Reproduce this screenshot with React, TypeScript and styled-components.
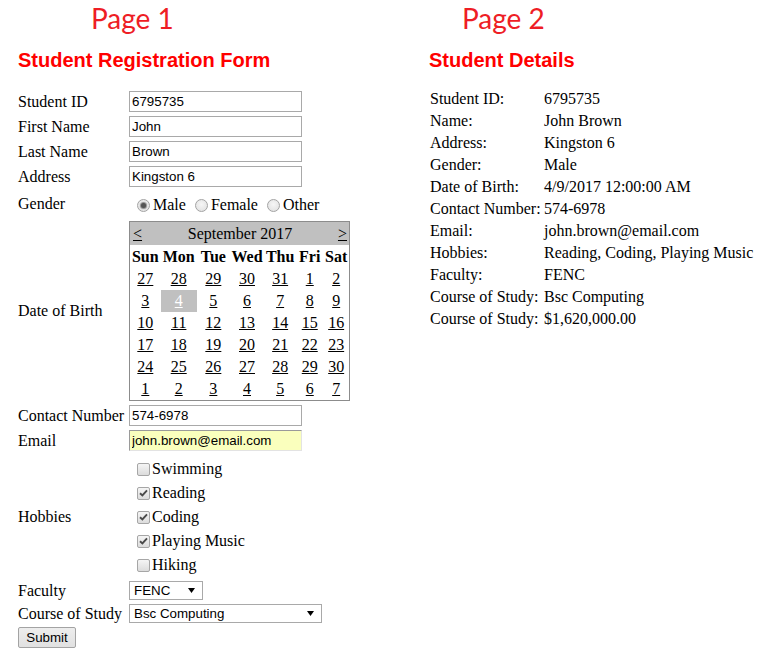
import React from "react";
import styled, { createGlobalStyle } from "styled-components";

const Global = createGlobalStyle`
  html, body { margin: 0; padding: 0; background: #fff; }
  body {
    font-family: "Liberation Serif", "Times New Roman", serif;
    font-size: 16px;
    color: #000;
  }
`;

const Page = styled.div`
  display: flex;
  align-items: flex-start;
  padding: 1px 0 0 18px;
  width: 759px;
  height: 654px;
  box-sizing: border-box;
  overflow: hidden;
`;

const Column = styled.div<{ $w?: number }>`
  display: flex;
  flex-direction: column;
  flex: none;
  width: ${(p) => (p.$w ? `${p.$w}px` : "auto")};
`;

const PageTag = styled.div<{ $indent: number }>`
  font-family: Lato, "Open Sans", sans-serif;
  font-size: 28px;
  line-height: 34px;
  color: #ee1d25;
  margin-left: ${(p) => p.$indent}px;
`;

const Heading = styled.h2`
  margin: 14px 0 0;
  font-family: "Liberation Sans", Arial, sans-serif;
  font-weight: bold;
  font-size: 20px;
  line-height: 23px;
  color: #ff0000;
`;

const Form = styled.form`
  display: flex;
  flex-direction: column;
  margin-top: 19px;
`;

const Row = styled.div<{ $h: number; $mt?: number }>`
  display: flex;
  align-items: center;
  height: ${(p) => p.$h}px;
  margin-top: ${(p) => p.$mt ?? 4}px;
  &:first-child {
    margin-top: 0;
  }
`;

const Label = styled.label`
  width: 111px;
  flex: none;
  line-height: 18px;
  white-space: nowrap;
`;

const TextInput = styled.input<{ $autofill?: boolean }>`
  box-sizing: border-box;
  width: 173px;
  height: 21px;
  margin: 0;
  padding: 1px 2px;
  border: 1px solid #a9a9a9;
  border-color: ${(p) => (p.$autofill ? "#9a9a9a #e3e3e3 #e3e3e3 #9a9a9a" : "#a9a9a9")};
  font-family: "Liberation Sans", Arial, sans-serif;
  font-size: 13.333px;
  color: #000;
  background: ${(p) => (p.$autofill ? "#faffbd" : "#fff")};
  outline: none;
`;

const OptionGroup = styled.div`
  display: flex;
  align-items: center;
  padding-left: 4px;
  padding-top: 2px;
`;

const Option = styled.span`
  display: inline-flex;
  align-items: center;
  margin-right: 5px;
  line-height: 18px;
`;

const RadioDot = styled.span<{ $on?: boolean }>`
  box-sizing: border-box;
  width: 13px;
  height: 13px;
  flex: none;
  margin: 0 3px 0 4px;
  border-radius: 50%;
  border: 1px solid #a3a3a3;
  background: radial-gradient(circle at 50% 40%, #f6f6f6 0%, #dedede 100%);
  display: inline-flex;
  align-items: center;
  justify-content: center;
  &::after {
    content: "";
    display: ${(p) => (p.$on ? "block" : "none")};
    width: 5px;
    height: 5px;
    border-radius: 50%;
    background: #555;
    box-shadow: 0 0 1px 1px #8a8a8a;
  }
`;

const CheckList = styled.div`
  display: flex;
  flex-direction: column;
  padding-left: 4px;
`;

const CheckRow = styled.div`
  display: flex;
  align-items: center;
  height: 24px;
  line-height: 18px;
`;

const CheckBox = styled.span`
  box-sizing: border-box;
  width: 13px;
  height: 13px;
  flex: none;
  margin: 0 2px 0 4px;
  border: 1px solid #a6a6a6;
  border-radius: 2px;
  background: linear-gradient(#f5f5f5, #dcdcdc);
  display: inline-flex;
  align-items: center;
  justify-content: center;
`;

const Cal = styled.table`
  width: 221px;
  border-collapse: collapse;
  border: 1px solid #8c8c8c;
  table-layout: fixed;
  font-family: "Liberation Serif", "Times New Roman", serif;
  font-size: 16px;
`;

const TitleCell = styled.td`
  background: #c0c0c0;
  padding: 0 2px 0 3px;
  height: 23px;
`;

const TitleBar = styled.div`
  display: flex;
  align-items: center;
  justify-content: space-between;
  line-height: 18px;
`;

const NavLink = styled.a`
  color: #000;
  text-decoration: underline;
  width: 20px;
  &:last-child {
    text-align: right;
  }
`;

const MonthName = styled.span`
  flex: 1;
  text-align: center;
`;

const DayHead = styled.th`
  height: 23px;
  padding: 0;
  font-weight: bold;
  text-align: center;
  white-space: nowrap;
`;

const DayCell = styled.td<{ $sel?: boolean }>`
  height: 22px;
  padding: 0;
  text-align: center;
  background: ${(p) => (p.$sel ? "#c0c0c0" : "transparent")};
  color: ${(p) => (p.$sel ? "#fff" : "#000")};
`;

const DayLink = styled.a`
  color: inherit;
  text-decoration: underline;
`;

const SelectBox = styled.div<{ $w: number }>`
  box-sizing: border-box;
  width: ${(p) => p.$w}px;
  height: 19px;
  border: 1px solid #a9a9a9;
  display: flex;
  align-items: center;
  justify-content: space-between;
  padding: 0 7px 0 4px;
  font-family: "Liberation Sans", Arial, sans-serif;
  font-size: 13.333px;
  background: #fff;
`;

const SubmitButton = styled.button`
  box-sizing: border-box;
  width: 58px;
  height: 21px;
  padding: 0;
  margin: 0;
  border: 1px solid #a3a3a3;
  border-radius: 2px;
  background: linear-gradient(#ededed, #e1e1e1);
  font-family: "Liberation Sans", Arial, sans-serif;
  font-size: 13.333px;
  color: #000;
`;

const Details = styled.div`
  display: grid;
  grid-template-columns: 114px auto;
  grid-auto-rows: 22px;
  align-items: center;
  margin: 16px 0 0 1px;
  line-height: 18px;
  white-space: nowrap;
`;

const Arrow = () => (
  <svg width="7" height="5" viewBox="0 0 7 5">
    <path d="M0 0 L7 0 L3.5 5 Z" fill="#000" />
  </svg>
);

const Tick = () => (
  <svg width="9" height="8" viewBox="0 0 9 8">
    <path d="M1 4.2 L3.4 6.5 L8 1.3" stroke="#4a4a4a" strokeWidth="1.9" fill="none" />
  </svg>
);

const weeks: number[][] = [
  [27, 28, 29, 30, 31, 1, 2],
  [3, 4, 5, 6, 7, 8, 9],
  [10, 11, 12, 13, 14, 15, 16],
  [17, 18, 19, 20, 21, 22, 23],
  [24, 25, 26, 27, 28, 29, 30],
  [1, 2, 3, 4, 5, 6, 7],
];
const dayNames = ["Sun", "Mon", "Tue", "Wed", "Thu", "Fri", "Sat"];
const colWidths = [31, 36, 33, 34, 32, 27, 26];

const hobbies = [
  { name: "Swimming", on: false },
  { name: "Reading", on: true },
  { name: "Coding", on: true },
  { name: "Playing Music", on: true },
  { name: "Hiking", on: false },
];

const details: [string, string][] = [
  ["Student ID:", "6795735"],
  ["Name:", "John Brown"],
  ["Address:", "Kingston 6"],
  ["Gender:", "Male"],
  ["Date of Birth:", "4/9/2017 12:00:00 AM"],
  ["Contact Number:", "574-6978"],
  ["Email:", "john.brown@email.com"],
  ["Hobbies:", "Reading, Coding, Playing Music"],
  ["Faculty:", "FENC"],
  ["Course of Study:", "Bsc Computing"],
  ["Course of Study:", "$1,620,000.00"],
];

const Calendar = () => (
  <Cal>
    <colgroup>
      {colWidths.map((w, i) => (
        <col key={i} style={{ width: w }} />
      ))}
    </colgroup>
    <tbody>
      <tr>
        <TitleCell colSpan={7}>
          <TitleBar>
            <NavLink>&lt;</NavLink>
            <MonthName>September 2017</MonthName>
            <NavLink>&gt;</NavLink>
          </TitleBar>
        </TitleCell>
      </tr>
      <tr>
        {dayNames.map((d) => (
          <DayHead key={d}>{d}</DayHead>
        ))}
      </tr>
      {weeks.map((w, wi) => (
        <tr key={wi}>
          {w.map((d, di) => (
            <DayCell key={di} $sel={wi === 1 && d === 4}>
              <DayLink>{d}</DayLink>
            </DayCell>
          ))}
        </tr>
      ))}
    </tbody>
  </Cal>
);

export default function App() {
  return (
    <>
      <Global />
      <Page>
        <Column $w={411}>
          <PageTag $indent={73}>Page 1</PageTag>
          <Heading>Student Registration Form</Heading>
          <Form onSubmit={(e) => e.preventDefault()}>
            <Row $h={21}>
              <Label>Student ID</Label>
              <TextInput defaultValue="6795735" />
            </Row>
            <Row $h={21}>
              <Label>First Name</Label>
              <TextInput defaultValue="John" />
            </Row>
            <Row $h={21}>
              <Label>Last Name</Label>
              <TextInput defaultValue="Brown" />
            </Row>
            <Row $h={21}>
              <Label>Address</Label>
              <TextInput defaultValue="Kingston 6" />
            </Row>
            <Row $h={26}>
              <Label>Gender</Label>
              <OptionGroup>
                <Option>
                  <RadioDot $on />
                  Male
                </Option>
                <Option>
                  <RadioDot />
                  Female
                </Option>
                <Option>
                  <RadioDot />
                  Other
                </Option>
              </OptionGroup>
            </Row>
            <Row $h={180}>
              <Label>Date of Birth</Label>
              <Calendar />
            </Row>
            <Row $h={21}>
              <Label>Contact Number</Label>
              <TextInput defaultValue="574-6978" />
            </Row>
            <Row $h={21}>
              <Label>Email</Label>
              <TextInput $autofill defaultValue="john.brown@email.com" />
            </Row>
            <Row $h={120} $mt={6}>
              <Label>Hobbies</Label>
              <CheckList>
                {hobbies.map((h) => (
                  <CheckRow key={h.name}>
                    <CheckBox>{h.on && <Tick />}</CheckBox>
                    {h.name}
                  </CheckRow>
                ))}
              </CheckList>
            </Row>
            <Row $h={19} $mt={4}>
              <Label>Faculty</Label>
              <SelectBox $w={74}>
                <span>FENC</span>
                <Arrow />
              </SelectBox>
            </Row>
            <Row $h={19}>
              <Label>Course of Study</Label>
              <SelectBox $w={193}>
                <span>Bsc Computing</span>
                <Arrow />
              </SelectBox>
            </Row>
            <Row $h={21}>
              <SubmitButton type="submit">Submit</SubmitButton>
            </Row>
          </Form>
        </Column>
        <Column>
          <PageTag $indent={33}>Page 2</PageTag>
          <Heading>Student Details</Heading>
          <Details>
            {details.map(([k, v], i) => (
              <React.Fragment key={i}>
                <span>{k}</span>
                <span>{v}</span>
              </React.Fragment>
            ))}
          </Details>
        </Column>
      </Page>
    </>
  );
}
